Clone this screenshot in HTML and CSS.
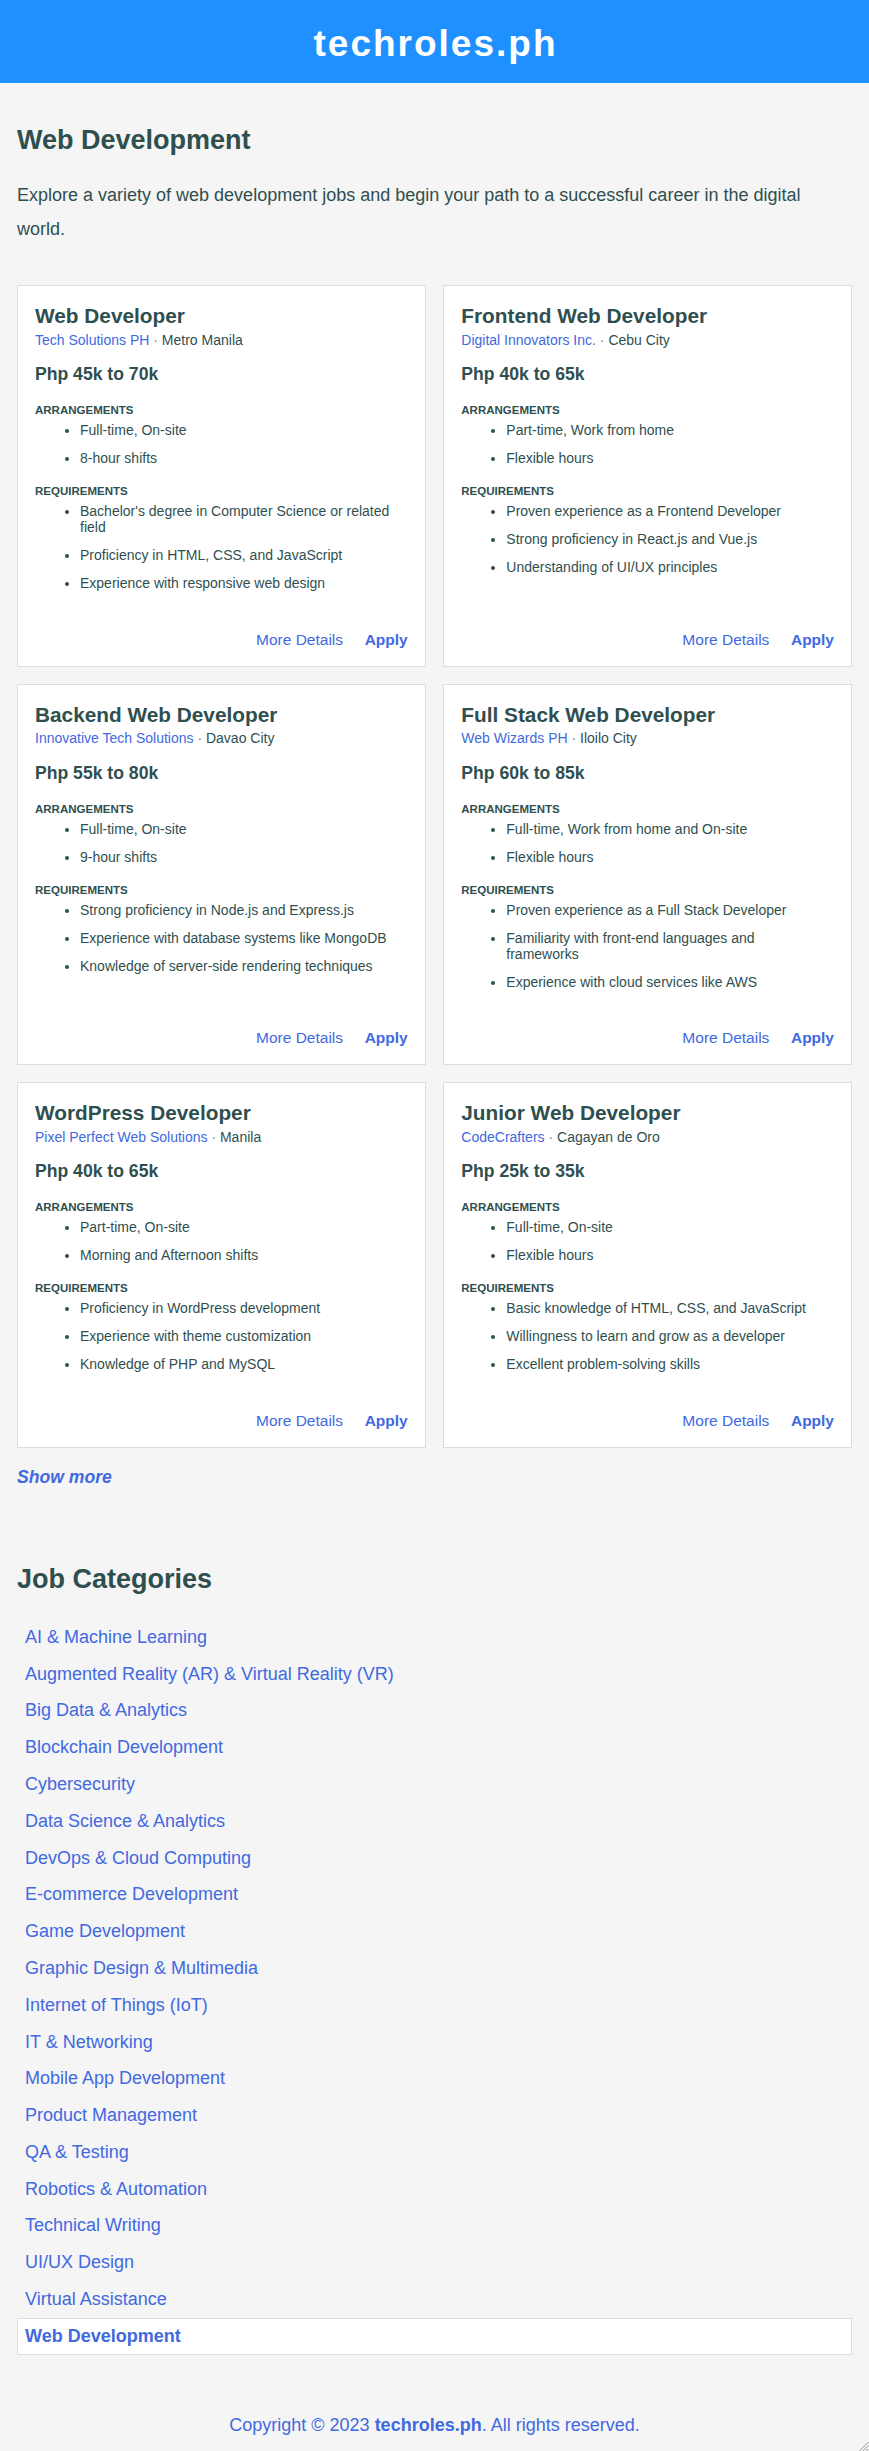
FILE: index.html
```html
<!DOCTYPE html>
<html lang="en">
<head>
<meta charset="utf-8">
<title>Web Development Jobs | techroles.ph</title>
<link rel="stylesheet" href="styles.css">
</head>
<body>
<header class="site-header">
  <h1 class="brand">techroles.ph</h1>
</header>

<main class="page">
  <h2 class="page-title">Web Development</h2>
  <p class="intro">Explore a variety of web development jobs and begin your path to a successful career in the digital world.</p>

  <section class="job-grid">
    <article class="job-card">
      <h3 class="job-title">Web Developer</h3>
      <p class="job-meta"><a class="company" href="#">Tech Solutions PH</a><span class="sep"> · </span><span class="location">Metro Manila</span></p>
      <p class="salary">Php 45k to 70k</p>
      <h4 class="label">Arrangements</h4>
      <ul class="list">
        <li>Full-time, On-site</li>
        <li>8-hour shifts</li>
      </ul>
      <h4 class="label">Requirements</h4>
      <ul class="list">
        <li>Bachelor's degree in Computer Science or related field</li>
        <li>Proficiency in HTML, CSS, and JavaScript</li>
        <li>Experience with responsive web design</li>
      </ul>
      <div class="actions"><a class="details" href="#">More Details</a><a class="apply" href="#">Apply</a></div>
    </article>

    <article class="job-card">
      <h3 class="job-title">Frontend Web Developer</h3>
      <p class="job-meta"><a class="company" href="#">Digital Innovators Inc.</a><span class="sep"> · </span><span class="location">Cebu City</span></p>
      <p class="salary">Php 40k to 65k</p>
      <h4 class="label">Arrangements</h4>
      <ul class="list">
        <li>Part-time, Work from home</li>
        <li>Flexible hours</li>
      </ul>
      <h4 class="label">Requirements</h4>
      <ul class="list">
        <li>Proven experience as a Frontend Developer</li>
        <li>Strong proficiency in React.js and Vue.js</li>
        <li>Understanding of UI/UX principles</li>
      </ul>
      <div class="actions"><a class="details" href="#">More Details</a><a class="apply" href="#">Apply</a></div>
    </article>

    <article class="job-card">
      <h3 class="job-title">Backend Web Developer</h3>
      <p class="job-meta"><a class="company" href="#">Innovative Tech Solutions</a><span class="sep"> · </span><span class="location">Davao City</span></p>
      <p class="salary">Php 55k to 80k</p>
      <h4 class="label">Arrangements</h4>
      <ul class="list">
        <li>Full-time, On-site</li>
        <li>9-hour shifts</li>
      </ul>
      <h4 class="label">Requirements</h4>
      <ul class="list">
        <li>Strong proficiency in Node.js and Express.js</li>
        <li>Experience with database systems like MongoDB</li>
        <li>Knowledge of server-side rendering techniques</li>
      </ul>
      <div class="actions"><a class="details" href="#">More Details</a><a class="apply" href="#">Apply</a></div>
    </article>

    <article class="job-card">
      <h3 class="job-title">Full Stack Web Developer</h3>
      <p class="job-meta"><a class="company" href="#">Web Wizards PH</a><span class="sep"> · </span><span class="location">Iloilo City</span></p>
      <p class="salary">Php 60k to 85k</p>
      <h4 class="label">Arrangements</h4>
      <ul class="list">
        <li>Full-time, Work from home and On-site</li>
        <li>Flexible hours</li>
      </ul>
      <h4 class="label">Requirements</h4>
      <ul class="list">
        <li>Proven experience as a Full Stack Developer</li>
        <li>Familiarity with front-end languages and frameworks</li>
        <li>Experience with cloud services like AWS</li>
      </ul>
      <div class="actions"><a class="details" href="#">More Details</a><a class="apply" href="#">Apply</a></div>
    </article>

    <article class="job-card">
      <h3 class="job-title">WordPress Developer</h3>
      <p class="job-meta"><a class="company" href="#">Pixel Perfect Web Solutions</a><span class="sep"> · </span><span class="location">Manila</span></p>
      <p class="salary">Php 40k to 65k</p>
      <h4 class="label">Arrangements</h4>
      <ul class="list">
        <li>Part-time, On-site</li>
        <li>Morning and Afternoon shifts</li>
      </ul>
      <h4 class="label">Requirements</h4>
      <ul class="list">
        <li>Proficiency in WordPress development</li>
        <li>Experience with theme customization</li>
        <li>Knowledge of PHP and MySQL</li>
      </ul>
      <div class="actions"><a class="details" href="#">More Details</a><a class="apply" href="#">Apply</a></div>
    </article>

    <article class="job-card">
      <h3 class="job-title">Junior Web Developer</h3>
      <p class="job-meta"><a class="company" href="#">CodeCrafters</a><span class="sep"> · </span><span class="location">Cagayan de Oro</span></p>
      <p class="salary">Php 25k to 35k</p>
      <h4 class="label">Arrangements</h4>
      <ul class="list">
        <li>Full-time, On-site</li>
        <li>Flexible hours</li>
      </ul>
      <h4 class="label">Requirements</h4>
      <ul class="list">
        <li>Basic knowledge of HTML, CSS, and JavaScript</li>
        <li>Willingness to learn and grow as a developer</li>
        <li>Excellent problem-solving skills</li>
      </ul>
      <div class="actions"><a class="details" href="#">More Details</a><a class="apply" href="#">Apply</a></div>
    </article>
  </section>

  <p class="more"><a class="show-more" href="#">Show more</a></p>

  <h2 class="section-title">Job Categories</h2>
  <ul class="categories">
    <li><a href="#">AI &amp; Machine Learning</a></li>
    <li><a href="#">Augmented Reality (AR) &amp; Virtual Reality (VR)</a></li>
    <li><a href="#">Big Data &amp; Analytics</a></li>
    <li><a href="#">Blockchain Development</a></li>
    <li><a href="#">Cybersecurity</a></li>
    <li><a href="#">Data Science &amp; Analytics</a></li>
    <li><a href="#">DevOps &amp; Cloud Computing</a></li>
    <li><a href="#">E-commerce Development</a></li>
    <li><a href="#">Game Development</a></li>
    <li><a href="#">Graphic Design &amp; Multimedia</a></li>
    <li><a href="#">Internet of Things (IoT)</a></li>
    <li><a href="#">IT &amp; Networking</a></li>
    <li><a href="#">Mobile App Development</a></li>
    <li><a href="#">Product Management</a></li>
    <li><a href="#">QA &amp; Testing</a></li>
    <li><a href="#">Robotics &amp; Automation</a></li>
    <li><a href="#">Technical Writing</a></li>
    <li><a href="#">UI/UX Design</a></li>
    <li><a href="#">Virtual Assistance</a></li>
    <li><a class="active" href="#">Web Development</a></li>
  </ul>
</main>

<footer class="site-footer">
  Copyright © 2023 <strong>techroles.ph</strong>. All rights reserved.
</footer>

<svg class="grip" width="12" height="12" viewBox="0 0 12 12" aria-hidden="true">
  <line x1="11.5" y1="2" x2="2" y2="11.5" stroke="#9a9a9a" stroke-width="1"/>
  <line x1="11.5" y1="5.5" x2="5.5" y2="11.5" stroke="#9a9a9a" stroke-width="1"/>
  <line x1="11.5" y1="9" x2="9" y2="11.5" stroke="#9a9a9a" stroke-width="1"/>
</svg>
</body>
</html>
```

FILE: styles.css
```css
html, body {
  margin: 0;
  padding: 0;
}

body {
  position: relative;
  background: #f5f5f5;
  color: #2f4f4f;
  font-family: "Liberation Sans", Arial, sans-serif;
}

a {
  color: #4169e1;
  text-decoration: none;
}

.site-header {
  box-sizing: border-box;
  height: 83px;
  padding-top: 23px;
  background: #1e90ff;
  text-align: center;
}

.brand {
  margin: 0;
  color: #ffffff;
  font-size: 37px;
  line-height: 42px;
  font-weight: 700;
  letter-spacing: 2px;
  padding-left: 2px;
}

.page {
  padding: 0 17px;
}

.page-title {
  margin: 42px 0 0;
  font-size: 27px;
  font-weight: 700;
  line-height: normal;
}

.intro {
  margin: 22px 0 0;
  max-width: 820px;
  font-size: 18px;
  line-height: 34px;
}

.job-grid {
  margin-top: 39px;
  display: grid;
  grid-template-columns: 1fr 1fr;
  gap: 17px 17.6px;
}

.job-card {
  display: flex;
  flex-direction: column;
  background: #ffffff;
  border: 1px solid #dddddd;
  padding: 18px 17px 17px;
}

.job-title {
  margin: 0 0 3.7px;
  font-size: 20.8px;
  font-weight: 700;
  line-height: normal;
}

.job-meta {
  margin: 0;
  font-size: 14px;
  line-height: normal;
}

.sep {
  color: #808080;
}

.salary {
  margin: 16.4px 0 0;
  font-size: 17.6px;
  font-weight: 700;
  line-height: normal;
}

.label {
  margin: 19px 0 6px;
  font-size: 11.5px;
  font-weight: 700;
  text-transform: uppercase;
  line-height: normal;
}

.list {
  margin: 0;
  padding: 0 10px 0 45px;
  font-size: 14px;
  line-height: normal;
}

.list li + li {
  margin-top: 12px;
}

.actions {
  margin-top: auto;
  padding-top: 39.5px;
  display: flex;
  justify-content: flex-end;
  gap: 21.6px;
  font-size: 15.5px;
  line-height: normal;
}

.apply {
  font-weight: 700;
}

.more {
  margin: 19px 0 0;
  font-size: 17.6px;
  line-height: normal;
}

.show-more {
  font-weight: 700;
  font-style: italic;
}

.section-title {
  margin: 76px 0 0;
  font-size: 27px;
  font-weight: 700;
  line-height: normal;
}

.categories {
  list-style: none;
  margin: 24px 0 0;
  padding: 0;
}

.categories a {
  display: block;
  padding: 7px;
  border: 1px solid transparent;
  font-size: 18px;
  line-height: 20.8px;
}

.categories a.active {
  background: #ffffff;
  border-color: #dddddd;
  font-weight: 700;
}

.site-footer {
  padding: 60px 0 17px;
  text-align: center;
  color: #4169e1;
  font-size: 18px;
  line-height: 20.7px;
}

.grip {
  position: absolute;
  right: 0;
  bottom: 0;
}
```
